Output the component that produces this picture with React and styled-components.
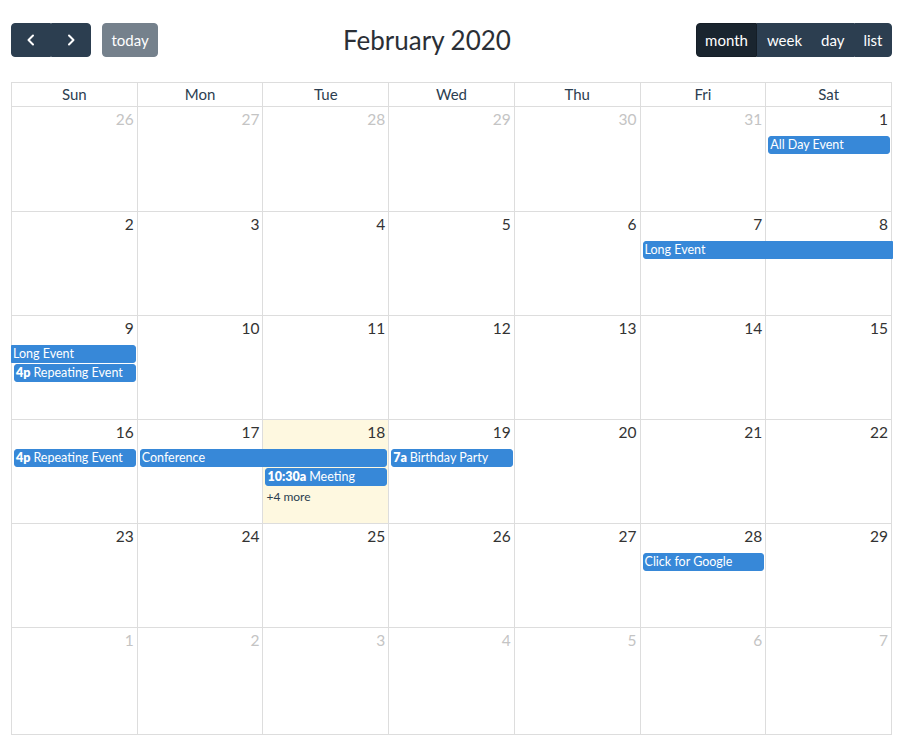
import React from "react";
import styled, { createGlobalStyle, css } from "styled-components";

const GlobalStyle = createGlobalStyle`
  html, body {
    margin: 0;
    padding: 0;
    background: #fff;
  }
  body {
    font-family: Lato, "Noto Sans", "Liberation Sans", sans-serif;
    font-size: 15px;
    color: #333;
  }
`;

const Page = styled.div`
  padding: 23px 14px 0 11px;
`;

const Toolbar = styled.div`
  display: flex;
  justify-content: space-between;
  align-items: center;
  margin-bottom: 25px;
`;

const Chunk = styled.div`
  display: flex;
  align-items: center;
`;

const ButtonGroup = styled.div`
  display: flex;
  margin-left: ${(p) => (p.$gap ? "11px" : "0")};
`;

const Button = styled.button`
  box-sizing: border-box;
  height: 34px;
  font-family: inherit;
  font-size: 15px;
  line-height: 22px;
  padding: 0 8.5px;
  border: 1px solid #2c3e50;
  background: ${(p) => (p.$active ? "#1a252f" : "#2c3e50")};
  border-color: ${(p) => (p.$active ? "#151e27" : "#2c3e50")};
  color: #fff;
  border-radius: 0;
  display: flex;
  align-items: center;
  justify-content: center;
  cursor: pointer;
  &:first-child {
    border-top-left-radius: 4px;
    border-bottom-left-radius: 4px;
  }
  &:last-child {
    border-top-right-radius: 4px;
    border-bottom-right-radius: 4px;
  }
  ${(p) =>
    p.$disabled &&
    css`
      opacity: 0.65;
      cursor: default;
    `}
`;

const IconButton = styled(Button)`
  width: 40px;
  padding: 0;
`;

const Title = styled.h2`
  margin: 0;
  font-size: 26px;
  font-weight: 400;
  color: #2b2f36;
  line-height: 34px;
`;

const Table = styled.div`
  border-top: 1px solid #ddd;
  border-left: 1px solid #ddd;
`;

const HeaderRow = styled.div`
  display: grid;
  grid-template-columns: repeat(7, 1fr);
`;

const HeaderCell = styled.div`
  text-align: center;
  padding: 2px 4px;
  line-height: 19px;
  color: #2c3e50;
  border-right: 1px solid #ddd;
  border-bottom: 1px solid #ddd;
`;

const Body = styled.div`
  display: grid;
  grid-template-rows: 105px repeat(4, 104px) 107px;
`;

const Week = styled.div`
  display: grid;
  grid-template-columns: repeat(7, minmax(0, 1fr));
  grid-template-rows: 29px repeat(3, 19px) 1fr;
  min-height: 0;
`;

const DayCell = styled.div`
  grid-row: 1 / -1;
  border-right: 1px solid #ddd;
  border-bottom: 1px solid #ddd;
  background: ${(p) => (p.$today ? "#fef8e0" : "transparent")};
  display: flex;
  justify-content: flex-end;
  align-items: flex-start;
`;

const DayNumber = styled.span`
  padding: 2px 3px 0 0;
  line-height: 21px;
  font-size: 15.5px;
  color: ${(p) => (p.$other ? "#c4c4c4" : "#333")};
`;

const Event = styled.div`
  position: relative;
  z-index: 1;
  height: 18px;
  box-sizing: border-box;
  margin: 0 ${(p) => (p.$contR ? "-1px" : "2px")} 1px ${(p) => (p.$contL ? "-1px" : "2px")};
  padding: 0 1px;
  background: #3788d8;
  border: 1px solid #3788d8;
  border-radius: ${(p) => (p.$contL ? "0" : "3px")} ${(p) => (p.$contR ? "0" : "3px")}
    ${(p) => (p.$contR ? "0" : "3px")} ${(p) => (p.$contL ? "0" : "3px")};
  color: #fff;
  font-size: 12.5px;
  line-height: 16px;
  white-space: nowrap;
  overflow: hidden;
`;

const EventTime = styled.b`
  font-weight: 800;
  margin-right: 3px;
`;

const MoreLink = styled.a`
  position: relative;
  z-index: 1;
  margin: 0 2px 0 3px;
  font-size: 12px;
  line-height: 19px;
  color: #2c3e50;
`;

const Chevron = ({ dir }) => (
  <svg width="14" height="14" viewBox="0 0 14 14" fill="none">
    <path
      d={dir === "left" ? "M9 2.5L4.5 7L9 11.5" : "M5 2.5L9.5 7L5 11.5"}
      stroke="#fff"
      strokeWidth="2"
      strokeLinecap="round"
      strokeLinejoin="round"
    />
  </svg>
);

const days = ["Sun", "Mon", "Tue", "Wed", "Thu", "Fri", "Sat"];

const weeks = [
  {
    dates: [26, 27, 28, 29, 30, 31, 1],
    other: [0, 1, 2, 3, 4, 5],
    events: [{ col: 7, span: 1, row: 1, title: "All Day Event" }],
  },
  {
    dates: [2, 3, 4, 5, 6, 7, 8],
    events: [{ col: 6, span: 2, row: 1, title: "Long Event", contR: true }],
  },
  {
    dates: [9, 10, 11, 12, 13, 14, 15],
    events: [
      { col: 1, span: 1, row: 1, title: "Long Event", contL: true },
      { col: 1, span: 1, row: 2, time: "4p", title: "Repeating Event" },
    ],
  },
  {
    dates: [16, 17, 18, 19, 20, 21, 22],
    today: 2,
    events: [
      { col: 1, span: 1, row: 1, time: "4p", title: "Repeating Event" },
      { col: 2, span: 2, row: 1, title: "Conference" },
      { col: 4, span: 1, row: 1, time: "7a", title: "Birthday Party" },
      { col: 3, span: 1, row: 2, time: "10:30a", title: "Meeting" },
    ],
    more: { col: 3, row: 3, text: "+4 more" },
  },
  {
    dates: [23, 24, 25, 26, 27, 28, 29],
    events: [{ col: 6, span: 1, row: 1, title: "Click for Google" }],
  },
  {
    dates: [1, 2, 3, 4, 5, 6, 7],
    other: [0, 1, 2, 3, 4, 5, 6],
  },
];

const App = () => {
  return (
    <Page>
      <GlobalStyle />
      <Toolbar>
        <Chunk>
          <ButtonGroup>
            <IconButton aria-label="prev">
              <Chevron dir="left" />
            </IconButton>
            <IconButton aria-label="next">
              <Chevron dir="right" />
            </IconButton>
          </ButtonGroup>
          <ButtonGroup $gap>
            <Button $disabled>today</Button>
          </ButtonGroup>
        </Chunk>
        <Title>February 2020</Title>
        <Chunk>
          <ButtonGroup>
            <Button $active>month</Button>
            <Button>week</Button>
            <Button>day</Button>
            <Button>list</Button>
          </ButtonGroup>
        </Chunk>
      </Toolbar>

      <Table>
        <HeaderRow>
          {days.map((d) => (
            <HeaderCell key={d}>{d}</HeaderCell>
          ))}
        </HeaderRow>
        <Body>
          {weeks.map((w, wi) => (
            <Week key={wi}>
              {w.dates.map((d, i) => (
                <DayCell
                  key={i}
                  $today={w.today === i}
                  style={{ gridColumn: i + 1 }}
                >
                  <DayNumber $other={(w.other || []).includes(i)}>{d}</DayNumber>
                </DayCell>
              ))}
              {(w.events || []).map((e, ei) => (
                <Event
                  key={ei}
                  $contL={e.contL}
                  $contR={e.contR}
                  style={{
                    gridColumn: `${e.col} / span ${e.span}`,
                    gridRow: e.row + 1,
                  }}
                >
                  {e.time && <EventTime>{e.time}</EventTime>}
                  {e.title}
                </Event>
              ))}
              {w.more && (
                <MoreLink
                  style={{ gridColumn: w.more.col, gridRow: w.more.row + 1 }}
                >
                  {w.more.text}
                </MoreLink>
              )}
            </Week>
          ))}
        </Body>
      </Table>
    </Page>
  );
};

export default App;
